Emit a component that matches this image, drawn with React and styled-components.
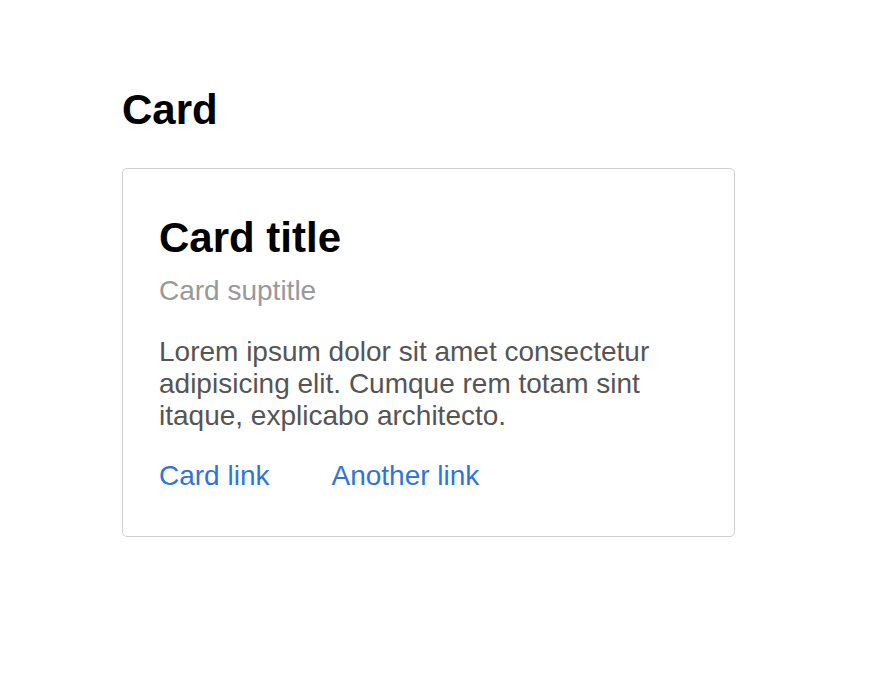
import React from 'react';
import styled, { createGlobalStyle } from 'styled-components';

const GlobalStyle = createGlobalStyle`
  * {
    box-sizing: border-box;
  }
  body {
    margin: 0;
    background: #fff;
    font-family: 'Liberation Sans', Arial, sans-serif;
  }
`;

const App = () => {
  return (
    <Wrapper>
      <GlobalStyle />
      <h1>Card</h1>
      <Card>
        <h2>Card title</h2>
        <h3>Card suptitle</h3>
        <p>
          Lorem ipsum dolor sit amet consectetur adipisicing elit. Cumque rem
          totam sint itaque, explicabo architecto.
        </p>
        <div className='card-links'>
          <a href='#'>Card link</a>
          <a href='#'>Another link</a>
        </div>
      </Card>
    </Wrapper>
  );
};

const Wrapper = styled.main`
  padding: 86px 0 0 122px;
  h1 {
    margin: 0 0 34px;
    font-size: 42px;
    line-height: 48px;
    font-weight: 700;
    color: #000;
  }
`;

const Card = styled.article`
  width: 613px;
  padding: 45px 36px 44px;
  border: 1px solid #cfcfcf;
  border-radius: 5px;
  h2 {
    margin: 0 0 13px;
    font-size: 42px;
    line-height: 48px;
    font-weight: 700;
    color: #000;
  }
  h3 {
    margin: 0 0 29px;
    font-size: 28px;
    line-height: 32px;
    font-weight: 400;
    color: #999;
  }
  p {
    margin: 0 0 28px;
    font-size: 28px;
    line-height: 32px;
    color: #555;
  }
  .card-links {
    display: flex;
    gap: 62px;
    a {
      font-size: 28px;
      line-height: 32px;
      color: #2f74dc;
      text-decoration: none;
    }
  }
`;

export default App;
